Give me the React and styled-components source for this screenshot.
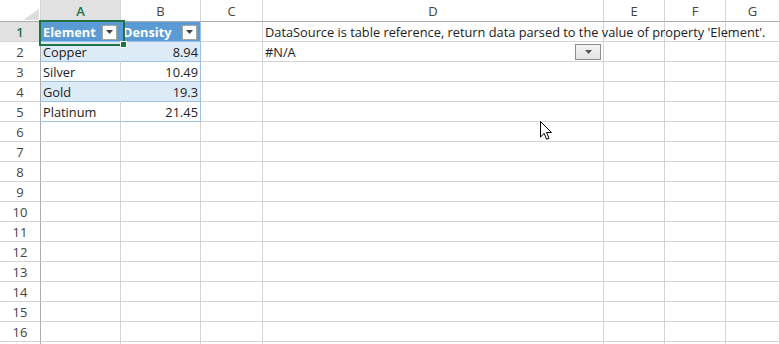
import React from "react";
import styled, { createGlobalStyle, css } from "styled-components";

const Global = createGlobalStyle`
  html, body { margin: 0; padding: 0; background: #fff; overflow: hidden; }
  body { font-family: "Open Sans", "Noto Sans", sans-serif; }
`;

const GRID = "#d4d4d4";
const TBLINE = "#9bc2e6";
const BLUE = "#5b9bd5";
const BAND = "#ddebf7";
const GREEN = "#217346";

const Sheet = styled.div`
  position: relative;
  width: 780px;
  height: 344px;
  overflow: hidden;
  display: grid;
  grid-template-columns: 41px 80px 80px 62px 341px 61px 61px 54px;
  grid-template-rows: 22px repeat(17, 20px);
`;

const Corner = styled.div`
  display: flex;
  align-items: flex-end;
  justify-content: flex-end;
  padding: 0 1px 1px 0;
  border-right: 1px solid ${GRID};
  border-bottom: 1px solid #ababab;
  background: #fff;
`;

const ColHeader = styled.div`
  display: flex;
  align-items: center;
  justify-content: center;
  font-size: 13px;
  color: ${(p) => (p.$active ? GREEN : "#444")};
  font-weight: ${(p) => (p.$active ? 600 : 400)};
  background: ${(p) => (p.$active ? "#e1e1e1" : "#fff")};
  border-right: 1px solid ${GRID};
  border-bottom: 1px solid #ababab;
  padding-top: 1px;
`;

const RowHeader = styled.div`
  display: flex;
  align-items: center;
  justify-content: center;
  font-size: 13px;
  padding-top: 1px;
  color: ${(p) => (p.$active ? GREEN : "#444")};
  font-weight: ${(p) => (p.$active ? 600 : 400)};
  background: ${(p) => (p.$active ? "#e1e1e1" : "#fff")};
  border-right: 1px solid #ababab;
  border-bottom: 1px solid ${GRID};
`;

const Cell = styled.div`
  display: flex;
  align-items: center;
  justify-content: ${(p) => (p.$right ? "flex-end" : "flex-start")};
  padding: 1px 2px 0 2px;
  font-size: 12.8px;
  color: #222;
  white-space: nowrap;
  min-width: 0;
  background: ${(p) => p.$bg || "#fff"};
  border-right: 1px solid ${(p) => p.$rc || GRID};
  border-bottom: 1px solid ${(p) => p.$bc || GRID};
  ${(p) =>
    p.$head &&
    css`
      color: #fff;
      font-weight: 700;
    `}
  position: relative;
  z-index: ${(p) => (p.$over ? 2 : 1)};
`;

const FilterBtn = styled.div`
  margin-left: auto;
  margin-right: 1px;
  width: 15px;
  height: 15px;
  flex: none;
  box-sizing: border-box;
  background: #fff;
  border: 1px solid #a6a6a6;
  display: flex;
  align-items: center;
  justify-content: center;
`;

const ListBtn = styled.div`
  margin-left: auto;
  width: 26px;
  height: 16px;
  flex: none;
  box-sizing: border-box;
  background: linear-gradient(#f4f4f4, #e2e2e6);
  border: 1px solid #8e8e8e;
  display: flex;
  align-items: center;
  justify-content: center;
`;

const Selection = styled.div`
  position: absolute;
  left: 39px;
  top: 20px;
  width: 82px;
  height: 22px;
  border: 2px solid ${GREEN};
  z-index: 5;
  pointer-events: none;
`;

const Handle = styled.div`
  position: absolute;
  right: -4px;
  bottom: -4px;
  width: 5px;
  height: 5px;
  background: ${GREEN};
  border: 1px solid #fff;
`;

const Cursor = styled.svg`
  position: absolute;
  left: 540px;
  top: 121px;
  z-index: 6;
`;

const Tri = ({ c = "#444" }) => (
  <svg width="7" height="4" viewBox="0 0 7 4">
    <path d="M0 0H7L3.5 4Z" fill={c} />
  </svg>
);

const cols = ["A", "B", "C", "D", "E", "F", "G"];

const table = [
  ["Copper", "8.94"],
  ["Silver", "10.49"],
  ["Gold", "19.3"],
  ["Platinum", "21.45"],
];

export default function App() {
  const rows = [];
  for (let r = 1; r <= 17; r++) {
    rows.push(
      <RowHeader key={`rh${r}`} $active={r === 1}>
        {r <= 16 ? r : ""}
      </RowHeader>
    );
    for (let c = 0; c < 7; c++) {
      const key = `c${r}-${c}`;
      if (r === 1 && c < 2) {
        rows.push(
          <Cell key={key} $bg={BLUE} $head $rc={c === 0 ? BLUE : TBLINE} $bc={TBLINE}>
            {c === 0 ? "Element" : "Density"}
            <FilterBtn>
              <Tri />
            </FilterBtn>
          </Cell>
        );
      } else if (r >= 2 && r <= 5 && c < 2) {
        const banded = r % 2 === 0;
        const [name, val] = table[r - 2];
        rows.push(
          <Cell
            key={key}
            $bg={banded ? BAND : "#fff"}
            $right={c === 1}
            $rc={c === 1 ? TBLINE : banded ? BAND : GRID}
            $bc={TBLINE}
          >
            {c === 0 ? name : val}
          </Cell>
        );
      } else if (r === 1 && c === 3) {
        rows.push(
          <Cell key={key} $over>
            DataSource is table reference, return data parsed to the value of property 'Element'.
          </Cell>
        );
      } else if (r === 2 && c === 3) {
        rows.push(
          <Cell key={key}>
            #N/A
            <ListBtn>
              <Tri c="#555" />
            </ListBtn>
          </Cell>
        );
      } else {
        rows.push(<Cell key={key} />);
      }
    }
  }

  return (
    <>
      <Global />
      <Sheet>
        <Corner>
          <svg width="16" height="11" viewBox="0 0 16 11">
            <path d="M16 0V11H0Z" fill="#dcdcdc" />
          </svg>
        </Corner>
        {cols.map((c) => (
          <ColHeader key={c} $active={c === "A"}>
            {c}
          </ColHeader>
        ))}
        {rows}
        <Selection>
          <Handle />
        </Selection>
        <Cursor width="12" height="20" viewBox="0 0 12 20">
          <path
            d="M0.5 0.5V16L4.2 12.4L6.6 18.3L9 17.3L6.6 11.5H11.5Z"
            fill="#fff"
            stroke="#000"
            strokeWidth="1"
          />
        </Cursor>
      </Sheet>
    </>
  );
}
